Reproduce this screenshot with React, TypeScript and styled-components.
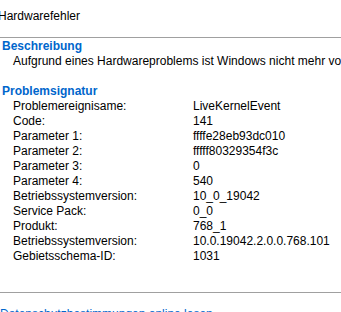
import styled, { createGlobalStyle } from 'styled-components';

const GlobalStyle = createGlobalStyle`
	html, body {
		margin: 0;
		padding: 0;
		background: #ffffff;
	}
	body {
		font-family: 'Segoe UI', 'Liberation Sans', Arial, sans-serif;
		font-size: 12px;
		color: #000000;
	}
`;

const rows: [string, string][] = [
	['Problemereignisame:', 'LiveKernelEvent'],
	['Code:', '141'],
	['Parameter 1:', 'ffffe28eb93dc010'],
	['Parameter 2:', 'fffff80329354f3c'],
	['Parameter 3:', '0'],
	['Parameter 4:', '540'],
	['Betriebssystemversion:', '10_0_19042'],
	['Service Pack:', '0_0'],
	['Produkt:', '768_1'],
	['Betriebssystemversion:', '10.0.19042.2.0.0.768.101'],
	['Gebietsschema-ID:', '1031'],
];

const App = () => {
	return (
		<Wrapper>
			<GlobalStyle />
			<Title>Hardwarefehler</Title>
			<Divider />
			<Section>
				<Heading>Beschreibung</Heading>
				<Description>Aufgrund eines Hardwareproblems ist Windows nicht mehr voll funktionsfähig.</Description>
			</Section>
			<Section $top={15}>
				<Heading>Problemsignatur</Heading>
				<SignatureList>
					{rows.map(([label, value], i) => (
						<SignatureRow key={i}>
							<Label>{label}</Label>
							<Value>{value}</Value>
						</SignatureRow>
					))}
				</SignatureList>
			</Section>
			<Divider $top={28} />
			<FooterLink>Datenschutzbestimmungen online lesen</FooterLink>
		</Wrapper>
	);
};

export const Wrapper = styled.div`
	width: 341px;
	height: 312px;
	overflow: hidden;
	display: flex;
	flex-direction: column;
`;

export const Title = styled.div`
	margin: 8px 0 0 -2px;
	line-height: 16px;
	white-space: nowrap;
`;

export const Divider = styled.div<{ $top?: number }>`
	margin-top: ${({ $top }) => $top ?? 13}px;
	height: 1px;
	background: #a0a0a0;
	flex-shrink: 0;
`;

export const Section = styled.div<{ $top?: number }>`
	margin-top: ${({ $top }) => $top ?? 1}px;
	padding-left: 2px;
`;

export const Heading = styled.div`
	color: #0066cc;
	font-weight: bold;
	line-height: 15px;
	white-space: nowrap;
`;

export const Description = styled.div`
	padding-left: 11px;
	line-height: 15px;
	white-space: nowrap;
`;

export const SignatureList = styled.div`
	padding-left: 11px;
	display: flex;
	flex-direction: column;
`;

export const SignatureRow = styled.div`
	display: grid;
	grid-template-columns: 180px 1fr;
	line-height: 15px;
	white-space: nowrap;
`;

export const Label = styled.span``;

export const Value = styled.span``;

export const FooterLink = styled.div`
	margin-top: 14px;
	color: #0066cc;
	line-height: 15px;
	white-space: nowrap;
	flex-shrink: 0;
`;

export default App;
